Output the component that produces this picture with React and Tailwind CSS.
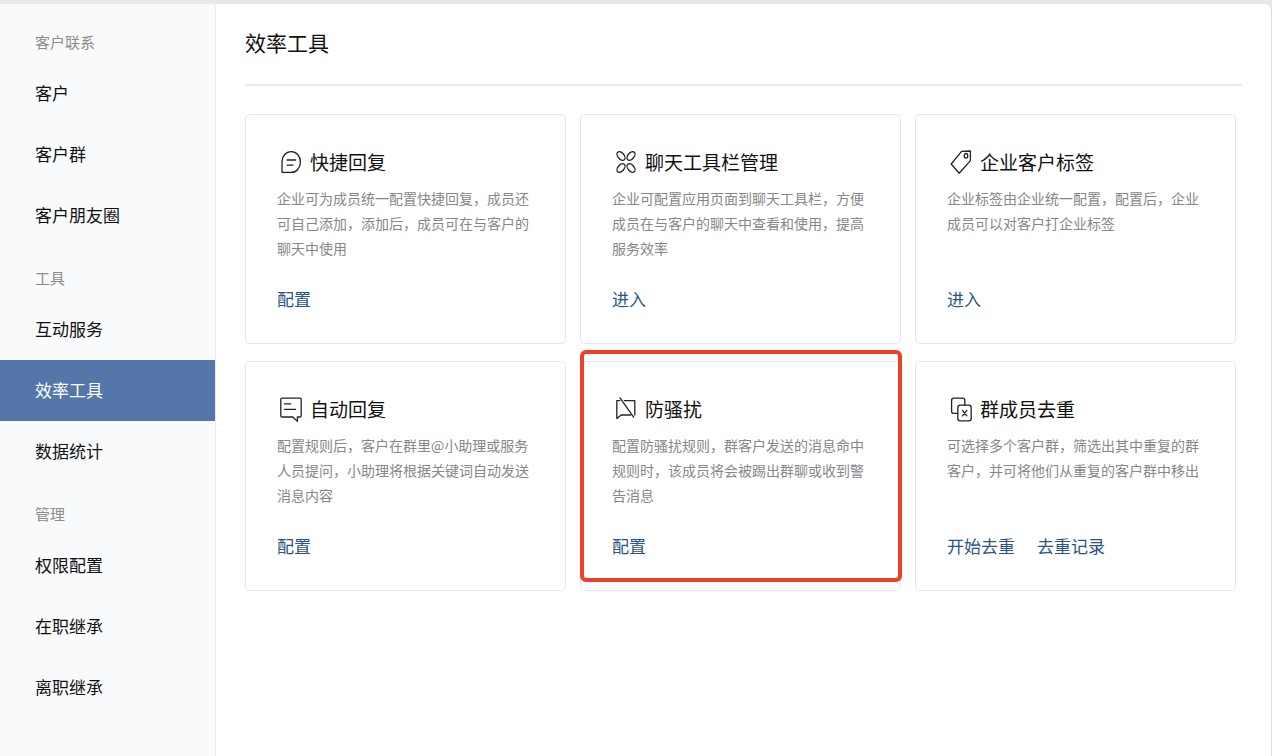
import React from 'react';

const NAV = [
  { label: '客户联系', items: ['客户', '客户群', '客户朋友圈'] },
  { label: '工具', items: ['互动服务', '效率工具', '数据统计'] },
  { label: '管理', items: ['权限配置', '在职继承', '离职继承'] },
];

function Icon({ children }) {
  return (
    <svg
      className="h-[26px] w-[26px] shrink-0"
      viewBox="0 0 26 26"
      fill="none"
      stroke="#222"
      strokeWidth="1.3"
      strokeLinejoin="round"
      strokeLinecap="round"
      aria-hidden="true"
    >
      {children}
    </svg>
  );
}

const ReplyIcon = () => (
  <Icon>
    <path d="M5 22.4V11.8C5 6 9 1.6 14.2 1.6S23.4 6 23.4 12s-4 10.4-9.2 10.4Z" />
    <path d="M10.2 10h8.4M10.2 15.2h5.8" />
  </Icon>
);

const CloverIcon = () => (
  <Icon>
    <ellipse cx="9" cy="6" rx="5" ry="3.1" transform="rotate(49 9 6)" />
    <ellipse cx="19" cy="6" rx="5" ry="3.1" transform="rotate(-49 19 6)" />
    <ellipse cx="9" cy="18" rx="5" ry="3.1" transform="rotate(-49 9 18)" />
    <ellipse cx="19" cy="18" rx="5" ry="3.1" transform="rotate(49 19 18)" />
  </Icon>
);

const TagIcon = () => (
  <Icon>
    <path d="M4.2 14 14.6 1.4 23.4 1v9.6L12.2 23.2Z" />
    <ellipse cx="19" cy="5.8" rx="1.8" ry="2.3" />
  </Icon>
);

const MessageIcon = () => (
  <Icon>
    <path d="M5 1.2h18q1.2 0 1.2 1.2v16.4q0 1.2-1.2 1.2h-2.6v4.4L15.8 20H5q-1.2 0-1.2-1.2V2.4q0-1.2 1.2-1.2Z" />
    <path d="M7.4 6.8h6.4M7.4 12.4h11.2" />
  </Icon>
);

const MutedIcon = () => (
  <Icon>
    <path d="M7.8 3.6H4.8v18l4.4-3.6h9.4" />
    <path d="M12.4 3.6h10.4V18" />
    <path d="m8 .8 13.6 19.4" />
  </Icon>
);

const DedupeIcon = () => (
  <Icon>
    <path d="M10.8 16.4H6.8q-2.2 0-2.2-2.2V3.4q0-2.2 2.2-2.2h8.8q2.2 0 2.2 2.2v4.8" />
    <rect x="10.8" y="8.2" width="13.4" height="15.6" rx="2.4" />
    <path d="m15.4 13.4 4.4 5.4M19.8 13.4l-4.4 5.4" />
  </Icon>
);

const TOOLS = [
  {
    title: '快捷回复',
    icon: ReplyIcon,
    text: '企业可为成员统一配置快捷回复，成员还可自己添加，添加后，成员可在与客户的聊天中使用',
    links: ['配置'],
  },
  {
    title: '聊天工具栏管理',
    icon: CloverIcon,
    text: '企业可配置应用页面到聊天工具栏，方便成员在与客户的聊天中查看和使用，提高服务效率',
    links: ['进入'],
  },
  {
    title: '企业客户标签',
    icon: TagIcon,
    text: '企业标签由企业统一配置，配置后，企业成员可以对客户打企业标签',
    links: ['进入'],
  },
  {
    title: '自动回复',
    icon: MessageIcon,
    text: '配置规则后，客户在群里@小助理或服务人员提问，小助理将根据关键词自动发送消息内容',
    links: ['配置'],
  },
  {
    title: '防骚扰',
    icon: MutedIcon,
    text: '配置防骚扰规则，群客户发送的消息命中规则时，该成员将会被踢出群聊或收到警告消息',
    links: ['配置'],
    highlighted: true,
  },
  {
    title: '群成员去重',
    icon: DedupeIcon,
    text: '可选择多个客户群，筛选出其中重复的群客户，并可将他们从重复的客户群中移出',
    links: ['开始去重', '去重记录'],
  },
];

function Sidebar({ active }) {
  return (
    <nav className="w-[216px] shrink-0 border-r border-[#e9ebf0] bg-[#f8fafc] pt-1.5">
      {NAV.map((group) => (
        <section key={group.label}>
          <h2 className="flex h-[53px] items-center pt-3 pl-[35px] text-[15px] text-[#8c8c8c]">
            {group.label}
          </h2>
          <ul>
            {group.items.map((item) => (
              <li key={item}>
                <a
                  href="#"
                  aria-current={item === active ? 'page' : undefined}
                  className={
                    item === active
                      ? 'flex h-[61px] items-center bg-[#5576a9] pb-0.5 pl-[35px] text-[17px] text-white'
                      : 'flex h-[61px] items-center pb-0.5 pl-[35px] text-[17px] text-[#111]'
                  }
                >
                  {item}
                </a>
              </li>
            ))}
          </ul>
        </section>
      ))}
    </nav>
  );
}

function ToolCard({ title, icon: Glyph, text, links, highlighted }) {
  return (
    <article className="relative flex min-h-[230px] flex-col rounded-[5px] border border-[#e6e6e6] px-[31px] pt-[34px] pb-8">
      <h2 className="flex h-7 items-center gap-[7px] text-[19px] text-[#111]">
        <Glyph />
        <span className="pb-0.5">{title}</span>
      </h2>
      <p className="mt-[9px] mb-6 text-[14px] leading-[25px] text-[#868789]">{text}</p>
      <div className="mt-auto flex gap-[22px] text-[17px] leading-6 text-[#2b5583]">
        {links.map((link) => (
          <a key={link} href="#">
            {link}
          </a>
        ))}
      </div>
      {highlighted && (
        <span className="pointer-events-none absolute -top-3 -right-0.5 bottom-2 -left-px rounded-md border-4 border-[#ee4026]" />
      )}
    </article>
  );
}

export default function App() {
  return (
    <div className="flex min-h-screen flex-col bg-[#e8e9eb] pt-1 font-['Noto_Sans_CJK_SC',sans-serif]">
      <div className="flex grow overflow-hidden rounded-tr-md border-r border-[#dcdcde] bg-white">
        <Sidebar active="效率工具" />
        <main className="min-w-0 grow pr-[29px] pl-[29px]">
          <h1 className="flex h-[82px] items-center border-b-2 border-[#e9eaef] pb-0.5 text-[21px] text-[#111]">
            效率工具
          </h1>
          <div className="mt-7 mr-1.5 mb-7 grid grid-cols-3 gap-x-3.5 gap-y-[17px]">
            {TOOLS.map((tool) => (
              <ToolCard key={tool.title} {...tool} />
            ))}
          </div>
        </main>
      </div>
    </div>
  );
}
